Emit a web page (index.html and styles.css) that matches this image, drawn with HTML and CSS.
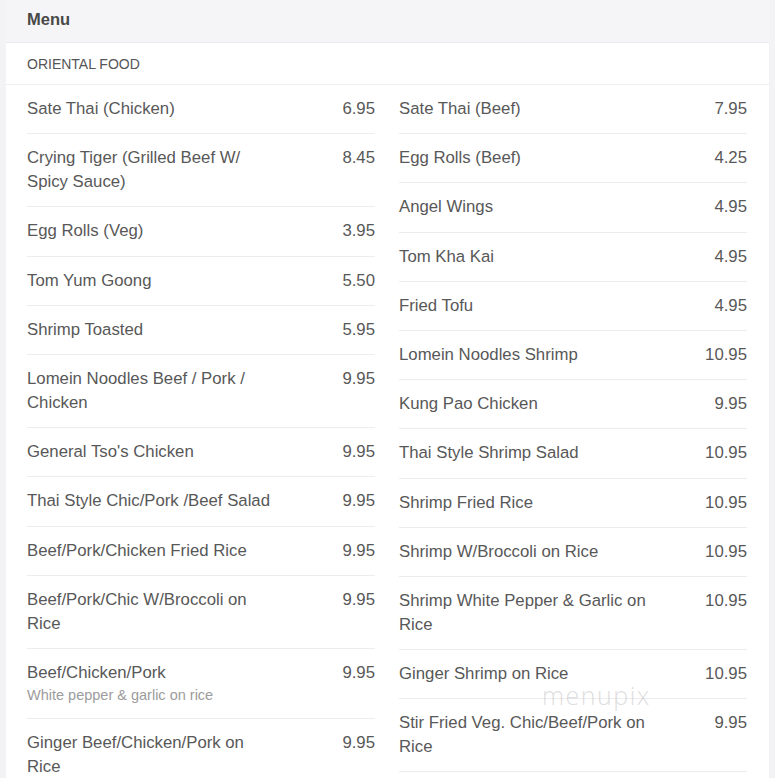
FILE: index.html
```html
<!DOCTYPE html>
<html>
<head>
<meta charset="utf-8">
<link rel="stylesheet" href="styles.css">
</head>
<body>
<div class="card">
  <div class="card-head">Menu</div>
  <div class="section-title">ORIENTAL FOOD</div>
  <div class="columns">
    <div class="col">
      <div class="item"><div class="name">Sate Thai (Chicken)</div><div class="price">6.95</div></div>
      <div class="item"><div class="name">Crying Tiger (Grilled Beef W/ Spicy Sauce)</div><div class="price">8.45</div></div>
      <div class="item"><div class="name">Egg Rolls (Veg)</div><div class="price">3.95</div></div>
      <div class="item"><div class="name">Tom Yum Goong</div><div class="price">5.50</div></div>
      <div class="item"><div class="name">Shrimp Toasted</div><div class="price">5.95</div></div>
      <div class="item"><div class="name">Lomein Noodles Beef / Pork / Chicken</div><div class="price">9.95</div></div>
      <div class="item"><div class="name">General Tso's Chicken</div><div class="price">9.95</div></div>
      <div class="item"><div class="name">Thai Style Chic/Pork /Beef Salad</div><div class="price">9.95</div></div>
      <div class="item"><div class="name">Beef/Pork/Chicken Fried Rice</div><div class="price">9.95</div></div>
      <div class="item"><div class="name">Beef/Pork/Chic W/Broccoli on Rice</div><div class="price">9.95</div></div>
      <div class="item"><div class="name">Beef/Chicken/Pork<div class="desc">White pepper &amp; garlic on rice</div></div><div class="price">9.95</div></div>
      <div class="item"><div class="name">Ginger Beef/Chicken/Pork on Rice</div><div class="price">9.95</div></div>
    </div>
    <div class="col">
      <div class="item"><div class="name">Sate Thai (Beef)</div><div class="price">7.95</div></div>
      <div class="item"><div class="name">Egg Rolls (Beef)</div><div class="price">4.25</div></div>
      <div class="item"><div class="name">Angel Wings</div><div class="price">4.95</div></div>
      <div class="item"><div class="name">Tom Kha Kai</div><div class="price">4.95</div></div>
      <div class="item"><div class="name">Fried Tofu</div><div class="price">4.95</div></div>
      <div class="item"><div class="name">Lomein Noodles Shrimp</div><div class="price">10.95</div></div>
      <div class="item"><div class="name">Kung Pao Chicken</div><div class="price">9.95</div></div>
      <div class="item"><div class="name">Thai Style Shrimp Salad</div><div class="price">10.95</div></div>
      <div class="item"><div class="name">Shrimp Fried Rice</div><div class="price">10.95</div></div>
      <div class="item"><div class="name">Shrimp W/Broccoli on Rice</div><div class="price">10.95</div></div>
      <div class="item"><div class="name">Shrimp White Pepper &amp; Garlic on Rice</div><div class="price">10.95</div></div>
      <div class="item"><div class="name">Ginger Shrimp on Rice</div><div class="price">10.95</div></div>
      <div class="item"><div class="name">Stir Fried Veg. Chic/Beef/Pork on Rice</div><div class="price">9.95</div></div>
    </div>
  </div>
  <div class="watermark">menupix</div>
</div>
</body>
</html>
```
FILE: styles.css
```css
html, body {
  margin: 0;
  padding: 0;
}
body {
  background: #f3f3f6;
  font-family: "Liberation Sans", Arial, sans-serif;
  color: #585858;
  overflow: hidden;
}
.card {
  position: relative;
  margin: 0 6px;
  background: #fff;
  min-height: 778px;
}
.card-head {
  background: #f5f5f8;
  height: 42px;
  line-height: 38px;
  padding: 0 21px;
  font-weight: bold;
  font-size: 16.5px;
  color: #484848;
  border-bottom: 1px solid #ebebef;
}
.section-title {
  height: 41px;
  line-height: 42px;
  padding: 0 21px;
  font-size: 14px;
  color: #555;
  border-bottom: 1px solid #eeeef0;
}
.columns {
  display: flex;
  gap: 24px;
  padding: 0 22px 0 21px;
}
.col {
  flex: 1;
  min-width: 0;
}
.item {
  display: flex;
  justify-content: space-between;
  align-items: flex-start;
  padding: 12.1px 0;
  border-bottom: 1px solid #ededf0;
  font-size: 16.75px;
  line-height: 24px;
}
.name {
  width: 250px;
}
.price {
  text-align: right;
}
.desc {
  font-size: 14.5px;
  line-height: 21px;
  color: #9c9c9c;
}
.watermark {
  position: absolute;
  left: 536px;
  top: 678px;
  font-size: 25px;
  font-weight: 300;
  letter-spacing: 1.5px;
  color: rgba(170, 170, 170, 0.4);
  font-family: "Open Sans", sans-serif;
}
```
